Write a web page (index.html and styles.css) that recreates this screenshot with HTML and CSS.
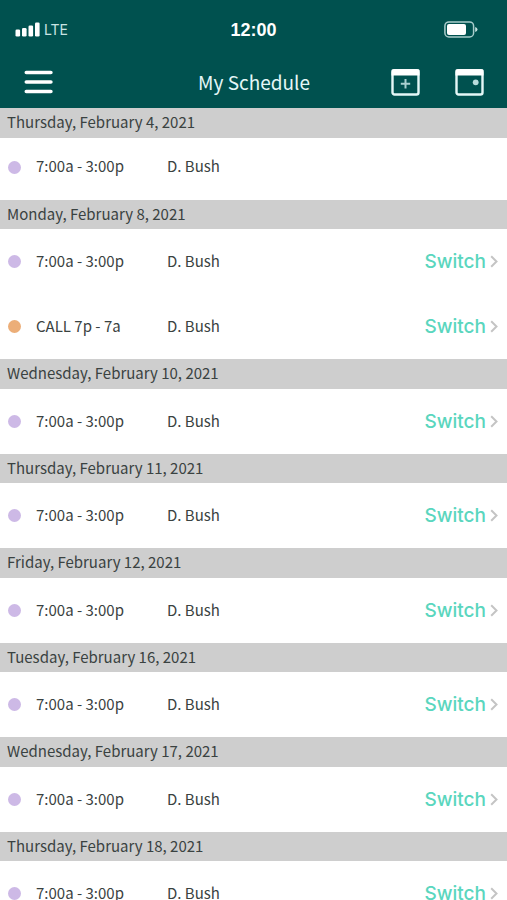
FILE: index.html
```html
<!DOCTYPE html>
<html lang="en">
<head>
<meta charset="utf-8">
<meta name="viewport" content="width=device-width, initial-scale=1">
<title>My Schedule</title>
<link rel="stylesheet" href="styles.css">
</head>
<body>
<header class="top">
  <div class="status">
    <div class="carrier">
      <svg width="25" height="15" viewBox="0 0 25 15" fill="#fff" aria-hidden="true"><rect x="0.500" y="7.500" width="4.600" height="7" rx="1.300"/><rect x="7" y="6" width="4.600" height="8.500" rx="1.300"/><rect x="13.500" y="3.500" width="4.600" height="11" rx="1.300"/><rect x="20" y="0.500" width="4.600" height="14" rx="1.300"/></svg>
      <span>LTE</span>
    </div>
    <div class="clock">12:00</div>
    <svg class="battery" width="34" height="17" viewBox="0 0 34 17" aria-hidden="true"><rect x="0.900" y="0.900" width="28.700" height="15" rx="4" fill="none" stroke="#a9cdcc" stroke-width="1.500"/><rect x="3" y="3" width="19" height="11" rx="2" fill="#fff"/><path d="M31.200 6v5q2.300-.8 2.300-2.500T31.200 6z" fill="#c5dfde"/></svg>
  </div>
  <nav class="nav">
    <div class="side"><button class="icon" type="button" aria-label="Menu"><svg width="29" height="24" viewBox="0 0 29 24" fill="none" stroke="#fff" stroke-width="3.600" stroke-linecap="round"><path d="M2.300 2.500h24.600M2.300 12h24.600M2.300 21.500h24.600"/></svg></button></div>
    <h1>My Schedule</h1>
    <div class="side end">
      <button class="icon" type="button" aria-label="Add event"><svg width="29" height="28" viewBox="0 0 29 28"><rect x="1.500" y="2.300" width="26" height="24.200" rx="2" fill="none" stroke="#e4f7f7" stroke-width="2.400"/><path d="M.5 2.500Q.5 1.200 2 1.200h25q1.500 0 1.500 1.300v5H.500z" fill="#fff"/><path d="M14.500 11v9.400M9.800 15.700h9.400" stroke="#a9d0d0" stroke-width="2"/></svg></button>
      <button class="icon" type="button" aria-label="Today"><svg width="29" height="28" viewBox="0 0 29 28"><rect x="1.500" y="2.300" width="26" height="24.200" rx="2" fill="none" stroke="#e4f7f7" stroke-width="2.400"/><path d="M.5 2.500Q.5 1.200 2 1.200h25q1.500 0 1.500 1.300v5H.500z" fill="#fff"/><circle cx="20.700" cy="14.300" r="2.900" fill="#b9dcdc"/></svg></button>
    </div>
  </nav>
</header>
<main class="list">
  <section>
    <h2>Thursday, February 4, 2021</h2>
    <div class="shift past"><i class="dot"></i><span>7:00a - 3:00p</span><span>D. Bush</span></div>
  </section>
  <section>
    <h2>Monday, February 8, 2021</h2>
    <div class="shift"><i class="dot"></i><span>7:00a - 3:00p</span><span>D. Bush</span><a class="switch" href="#">Switch<svg width="8" height="13" viewBox="0 0 8 13"><path d="M1.200 1.200 6.500 6.500 1.200 11.800"/></svg></a></div>
    <div class="shift"><i class="dot call"></i><span>CALL 7p - 7a</span><span>D. Bush</span><a class="switch" href="#">Switch<svg width="8" height="13" viewBox="0 0 8 13"><path d="M1.200 1.200 6.500 6.500 1.200 11.800"/></svg></a></div>
  </section>
  <section>
    <h2>Wednesday, February 10, 2021</h2>
    <div class="shift"><i class="dot"></i><span>7:00a - 3:00p</span><span>D. Bush</span><a class="switch" href="#">Switch<svg width="8" height="13" viewBox="0 0 8 13"><path d="M1.200 1.200 6.500 6.500 1.200 11.800"/></svg></a></div>
  </section>
  <section>
    <h2>Thursday, February 11, 2021</h2>
    <div class="shift"><i class="dot"></i><span>7:00a - 3:00p</span><span>D. Bush</span><a class="switch" href="#">Switch<svg width="8" height="13" viewBox="0 0 8 13"><path d="M1.200 1.200 6.500 6.500 1.200 11.800"/></svg></a></div>
  </section>
  <section>
    <h2>Friday, February 12, 2021</h2>
    <div class="shift"><i class="dot"></i><span>7:00a - 3:00p</span><span>D. Bush</span><a class="switch" href="#">Switch<svg width="8" height="13" viewBox="0 0 8 13"><path d="M1.200 1.200 6.500 6.500 1.200 11.800"/></svg></a></div>
  </section>
  <section>
    <h2>Tuesday, February 16, 2021</h2>
    <div class="shift"><i class="dot"></i><span>7:00a - 3:00p</span><span>D. Bush</span><a class="switch" href="#">Switch<svg width="8" height="13" viewBox="0 0 8 13"><path d="M1.200 1.200 6.500 6.500 1.200 11.800"/></svg></a></div>
  </section>
  <section>
    <h2>Wednesday, February 17, 2021</h2>
    <div class="shift"><i class="dot"></i><span>7:00a - 3:00p</span><span>D. Bush</span><a class="switch" href="#">Switch<svg width="8" height="13" viewBox="0 0 8 13"><path d="M1.200 1.200 6.500 6.500 1.200 11.800"/></svg></a></div>
  </section>
  <section>
    <h2>Thursday, February 18, 2021</h2>
    <div class="shift"><i class="dot"></i><span>7:00a - 3:00p</span><span>D. Bush</span><a class="switch" href="#">Switch<svg width="8" height="13" viewBox="0 0 8 13"><path d="M1.200 1.200 6.500 6.500 1.200 11.800"/></svg></a></div>
  </section>
</main>
</body>
</html>
```
FILE: styles.css
```css
* {
  box-sizing: border-box;
}

body {
  margin: 0;
  height: 100vh;
  display: flex;
  flex-direction: column;
  background: #fff;
  color: #3a4241;
  font-family: "Noto Sans CJK SC", "Noto Sans", sans-serif;
  font-size: 15px;
  line-height: 24px;
}

svg {
  display: block;
}

.top {
  flex: none;
  background: #00514f;
  color: #fff;
}

.status {
  display: grid;
  grid-template-columns: 1fr auto 1fr;
  align-items: center;
  height: 59px;
  padding: 0 15px;
}

.carrier {
  display: flex;
  align-items: center;
  gap: 4px;
  color: #c9e3e3;
  font-family: Inter, "Liberation Sans", sans-serif;
  font-size: 14px;
}

.clock {
  font-family: "Liberation Sans", sans-serif;
  font-size: 18px;
  font-weight: 700;
}

.battery {
  justify-self: end;
  margin-right: 14px;
}

.nav {
  display: grid;
  grid-template-columns: 1fr auto 1fr;
  align-items: center;
  height: 49px;
  padding: 0 23px 3px 24px;
}

.nav h1 {
  margin: 0;
  font-size: 19px;
  font-weight: 400;
  color: #e4f7f7;
}

.side {
  display: flex;
  gap: 35px;
}

.end {
  justify-content: flex-end;
}

.icon {
  padding: 0;
  border: 0;
  background: none;
  cursor: pointer;
}

.list {
  flex: 1;
  min-height: 0;
  overflow-y: auto;
  scrollbar-width: none;
}

.list h2 {
  margin: 0;
  padding: 0 7px 2px;
  background: #cecece;
  font-size: 15px;
  font-weight: 400;
  line-height: 28px;
}

.list section:nth-child(even) h2 {
  line-height: 27px;
}

.shift {
  display: grid;
  grid-template-columns: 28px 131px 1fr auto;
  align-items: center;
  height: 65px;
  padding: 0 8px;
}

.shift span {
  padding-bottom: 2px;
}

.past {
  height: 62px;
  padding-bottom: 4px;
}

.dot {
  width: 13px;
  height: 13px;
  border-radius: 50%;
  background: #cdb9e6;
}

.call {
  background: #ecae78;
}

.switch {
  display: flex;
  align-items: center;
  gap: 4px;
  padding-right: 1px;
  color: #5ad6be;
  font-family: Inter, "Liberation Sans", sans-serif;
  font-size: 19px;
  font-weight: 500;
  text-decoration: none;
}

.switch path {
  fill: none;
  stroke: #c4c4c4;
  stroke-width: 2;
}
```
